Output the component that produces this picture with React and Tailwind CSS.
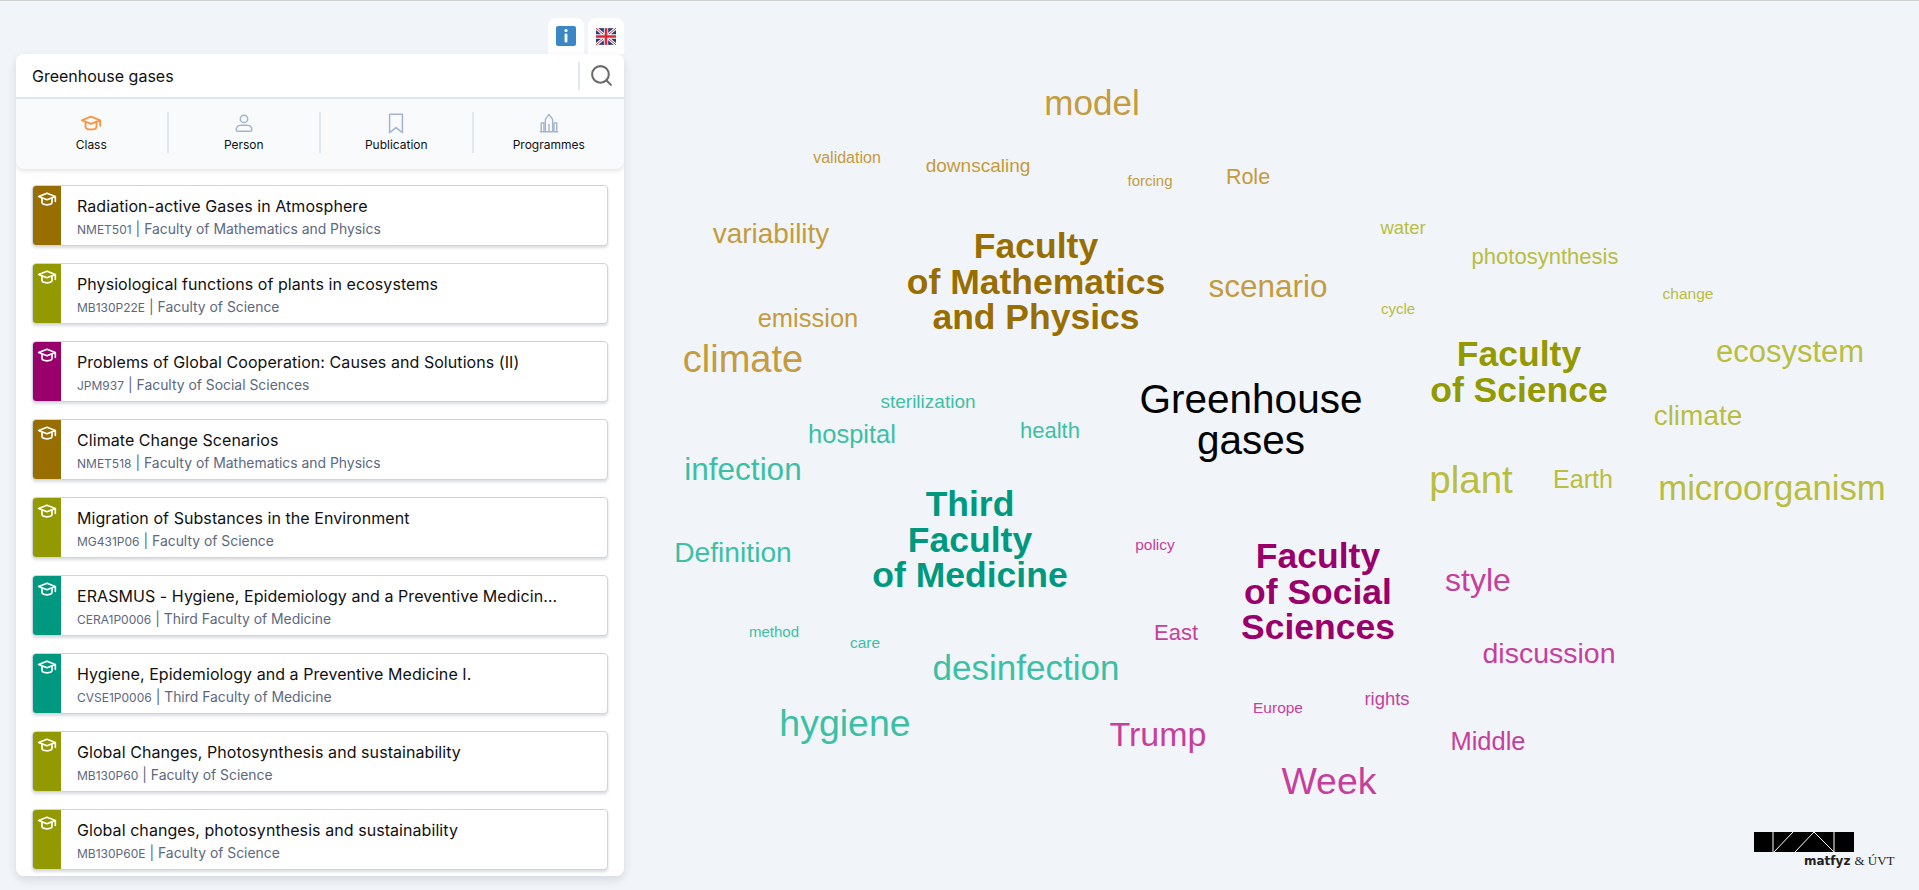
import { Search } from "lucide-react";

const classes = [
  { title: "Radiation-active Gases in Atmosphere", code: "NMET501", faculty: "Faculty of Mathematics and Physics", bar: "bg-[#996e00]" },
  { title: "Physiological functions of plants in ecosystems", code: "MB130P22E", faculty: "Faculty of Science", bar: "bg-[#939900]" },
  { title: "Problems of Global Cooperation: Causes and Solutions (II)", code: "JPM937", faculty: "Faculty of Social Sciences", bar: "bg-[#99006b]" },
  { title: "Climate Change Scenarios", code: "NMET518", faculty: "Faculty of Mathematics and Physics", bar: "bg-[#996e00]" },
  { title: "Migration of Substances in the Environment", code: "MG431P06", faculty: "Faculty of Science", bar: "bg-[#939900]" },
  { title: "ERASMUS - Hygiene, Epidemiology and a Preventive Medicine I.", code: "CERA1P0006", faculty: "Third Faculty of Medicine", bar: "bg-[#009980]" },
  { title: "Hygiene, Epidemiology and a Preventive Medicine I.", code: "CVSE1P0006", faculty: "Third Faculty of Medicine", bar: "bg-[#009980]" },
  { title: "Global Changes, Photosynthesis and sustainability", code: "MB130P60", faculty: "Faculty of Science", bar: "bg-[#939900]" },
  { title: "Global changes, photosynthesis and sustainability", code: "MB130P60E", faculty: "Faculty of Science", bar: "bg-[#939900]" },
];

const math = "text-[#c49b3d]";
const sci = "text-[#b9bd40]";
const soc = "text-[#c63f9c]";
const med = "text-[#3dbfa5]";

const words = [
  { t: "model", c: `${math} left-[1092px] top-[101px] text-[35px]` },
  { t: "validation", c: `${math} left-[847px] top-[157px] text-[16px]` },
  { t: "downscaling", c: `${math} left-[978px] top-[164px] text-[19px]` },
  { t: "forcing", c: `${math} left-[1150px] top-[179px] text-[15px]` },
  { t: "Role", c: `${math} left-[1248px] top-[177px] text-[21.5px]` },
  { t: "variability", c: `${math} left-[771px] top-[233px] text-[28px]` },
  { t: "scenario", c: `${math} left-[1268px] top-[286px] text-[31.5px]` },
  { t: "emission", c: `${math} left-[808px] top-[318px] text-[25.5px]` },
  { t: "climate", c: `${math} left-[743px] top-[358px] text-[38px]` },
  { t: "water", c: `${sci} left-[1403px] top-[227px] text-[18.5px]` },
  { t: "photosynthesis", c: `${sci} left-[1545px] top-[256px] text-[22px]` },
  { t: "change", c: `${sci} left-[1688px] top-[293px] text-[15.5px]` },
  { t: "cycle", c: `${sci} left-[1398px] top-[307px] text-[15px]` },
  { t: "ecosystem", c: `${sci} left-[1790px] top-[350px] text-[31px]` },
  { t: "climate", c: `${sci} left-[1698px] top-[415px] text-[28px]` },
  { t: "plant", c: `${sci} left-[1471px] top-[479px] text-[38.5px]` },
  { t: "Earth", c: `${sci} left-[1583px] top-[478px] text-[25px]` },
  { t: "microorganism", c: `${sci} left-[1772px] top-[487px] text-[34.7px]` },
  { t: "sterilization", c: `${med} left-[928px] top-[400px] text-[19px]` },
  { t: "hospital", c: `${med} left-[852px] top-[434px] text-[25.5px]` },
  { t: "health", c: `${med} left-[1050px] top-[430px] text-[22px]` },
  { t: "infection", c: `${med} left-[743px] top-[469px] text-[31.5px]` },
  { t: "Definition", c: `${med} left-[733px] top-[551px] text-[28.2px]` },
  { t: "method", c: `${med} left-[774px] top-[630px] text-[15px]` },
  { t: "care", c: `${med} left-[865px] top-[642px] text-[15.5px]` },
  { t: "desinfection", c: `${med} left-[1026px] top-[666px] text-[35px]` },
  { t: "hygiene", c: `${med} left-[845px] top-[723px] text-[37.5px]` },
  { t: "policy", c: `${soc} left-[1155px] top-[544px] text-[15.5px]` },
  { t: "style", c: `${soc} left-[1478px] top-[579px] text-[32px]` },
  { t: "discussion", c: `${soc} left-[1549px] top-[652px] text-[28.5px]` },
  { t: "East", c: `${soc} left-[1176px] top-[632px] text-[22px]` },
  { t: "Trump", c: `${soc} left-[1158px] top-[733px] text-[34px]` },
  { t: "Europe", c: `${soc} left-[1278px] top-[707px] text-[15.5px]` },
  { t: "rights", c: `${soc} left-[1387px] top-[698px] text-[18.5px]` },
  { t: "Middle", c: `${soc} left-[1488px] top-[741px] text-[25.5px]` },
  { t: "Week", c: `${soc} left-[1329px] top-[781px] text-[37.5px]` },
];

const heads = [
  { lines: ["Faculty", "of Mathematics", "and Physics"], c: "text-[#996e00] left-[1036px] top-[281px]" },
  { lines: ["Faculty", "of Science"], c: "text-[#939900] left-[1519px] top-[371px]" },
  { lines: ["Third", "Faculty", "of Medicine"], c: "text-[#009980] left-[970px] top-[539px]" },
  { lines: ["Faculty", "of Social", "Sciences"], c: "text-[#99006b] left-[1318px] top-[591px]" },
];

function CapIcon({ className }) {
  return (
    <svg className={className} viewBox="0 0 24 24" fill="none" stroke="currentColor" strokeWidth="2" strokeLinecap="round" strokeLinejoin="round">
      <path d="M22 9l-10-4-10 4 10 4 10-4v6" />
      <path d="M6 10.6V16a6 3 0 0 0 12 0v-5.4" />
    </svg>
  );
}

function PersonIcon({ className }) {
  return (
    <svg className={className} viewBox="0 0 24 24" fill="none" stroke="currentColor" strokeWidth="1.6" strokeLinejoin="round">
      <circle cx="12" cy="7.5" r="4" />
      <path d="M8.5 14.5h7c3 0 5 2.2 5 5 0 1-.5 1.5-1.5 1.5H5c-1 0-1.500-.5-1.500-1.500 0-2.800 2-5 5-5z" />
    </svg>
  );
}

function BookmarkIcon({ className }) {
  return (
    <svg className={className} viewBox="0 0 24 24" fill="none" stroke="currentColor" strokeWidth="1.6" strokeLinejoin="round">
      <path d="M5 2.500h14v20l-7-5.500-7 5.500z" />
    </svg>
  );
}

function BuildingIcon({ className }) {
  return (
    <svg className={className} viewBox="0 0 24 24" fill="none" stroke="currentColor" strokeWidth="1.5" strokeLinejoin="round">
      <path d="M2 21.500h20" />
      <path d="M3.500 21.500V12h3v9.500M17.500 21.500V12h3v9.500" />
      <path d="M8 21.500V8l4-5.500L16 8v13.500" />
      <path d="M12 21.500V13" />
    </svg>
  );
}

function InfoIcon() {
  return (
    <svg className="h-5 w-5" viewBox="0 0 20 20">
      <rect width="20" height="20" rx="2" fill="#3b86c4" />
      <circle cx="10" cy="4.500" r="1.600" fill="#fff" />
      <rect x="8.600" y="7.500" width="2.800" height="9" rx="1" fill="#fff" />
    </svg>
  );
}

function FlagIcon() {
  return (
    <svg className="h-[17px] w-5" viewBox="0 0 60 50">
      <rect width="60" height="50" fill="#243b7a" />
      <path d="M0 0l60 50M60 0L0 50" stroke="#fff" strokeWidth="9" />
      <path d="M0 0l60 50M60 0L0 50" stroke="#d8283c" strokeWidth="3" />
      <path d="M30 0v50M0 25h60" stroke="#fff" strokeWidth="13" />
      <path d="M30 0v50M0 25h60" stroke="#d8283c" strokeWidth="8" />
    </svg>
  );
}

function Logo() {
  return (
    <svg className="h-5 w-[100px]" viewBox="0 0 100 20">
      <rect width="100" height="20" fill="#000" />
      <path d="M19 0v20M20 20L39 0M41 20L60 0L80 20M80 0v20" stroke="#fff" strokeWidth="1" fill="none" />
    </svg>
  );
}

const tabs = [
  { label: "Class", Icon: CapIcon, color: "text-[#fb923c]" },
  { label: "Person", Icon: PersonIcon, color: "text-[#a3b3cc]" },
  { label: "Publication", Icon: BookmarkIcon, color: "text-[#a3b3cc]" },
  { label: "Programmes", Icon: BuildingIcon, color: "text-[#a3b3cc]" },
];

export default function App() {
  return (
    <div className="relative h-[890px] overflow-hidden border-t border-[#cfcfcf] bg-[#f1f5f9] font-['Inter',sans-serif]">
      {/* Word cloud */}
      <div className="absolute inset-0 font-['Liberation_Sans',sans-serif]">
        {words.map((w, i) => (
          <span key={i} className={`absolute -translate-x-1/2 -translate-y-1/2 whitespace-nowrap leading-none ${w.c}`}>
            {w.t}
          </span>
        ))}
        {heads.map((h) => (
          <div key={h.lines.join()} className={`absolute -translate-x-1/2 -translate-y-1/2 whitespace-nowrap text-center text-[35.500px] font-bold leading-[35.500px] ${h.c}`}>
            {h.lines.map((l) => (
              <div key={l}>{l}</div>
            ))}
          </div>
        ))}
        <div className="absolute left-[1251px] top-[419px] -translate-x-1/2 -translate-y-1/2 whitespace-nowrap text-center text-[40.500px] leading-[41px] text-black">
          <div>Greenhouse</div>
          <div>gases</div>
        </div>
        <div className="absolute left-[1754px] top-[831px]">
          <Logo />
          <div className="ml-[50px] mt-[1px] flex items-baseline gap-1 whitespace-nowrap text-[12px] leading-4 text-[#222]">
            <span className="font-['DejaVu_Sans',sans-serif] font-bold">matfyz</span>
            <span className="font-['Liberation_Serif',serif] text-[13px]">&amp; ÚVT</span>
          </div>
        </div>
      </div>

      {/* Left panel */}
      <div className="relative ml-4 flex w-[608px] flex-col pt-[17px]">
        <div className="flex justify-end gap-1">
          <div className="flex h-[36px] w-9 items-center justify-center rounded-t-lg bg-white"><InfoIcon /></div>
          <div className="flex h-[36px] w-9 items-center justify-center rounded-t-lg bg-white"><FlagIcon /></div>
        </div>
        <div className="flex h-[822px] flex-col overflow-hidden rounded-lg bg-white shadow-[0_4px_10px_rgba(15,23,42,0.12)]">
          <div className="flex h-[45px] shrink-0 items-center border-b-2 border-[#e2e8f0] pl-4 pr-[10px]">
            <div className="flex-1 text-base text-[#111]">Greenhouse gases</div>
            <div className="flex h-7 items-center border-l-2 border-[#e2e8f0] pl-[9px]">
              <Search className="h-[25px] w-[25px] text-[#6b6b6b]" strokeWidth={2} />
            </div>
          </div>
          <div className="flex h-[70px] shrink-0 items-start rounded-b-lg bg-[#f8fafc] pt-[13px] shadow-[0_2px_4px_rgba(15,23,42,0.12)]">
            {tabs.map((tab, i) => (
              <div key={tab.label} className={`flex h-[41px] flex-1 flex-col items-center justify-between ${i < 3 ? "border-r-2 border-[#e2e8f0]" : ""}`}>
                <tab.Icon className={`h-[22px] w-[22px] ${tab.color}`} />
                <div className="text-xs leading-4 text-[#111]">{tab.label}</div>
              </div>
            ))}
          </div>
          <div className="flex flex-col gap-[17px] pb-2 pl-4 pr-4 pt-4">
            {classes.map((c) => (
              <div key={c.code} className="flex h-[61px] shrink-0 overflow-hidden rounded border border-[#cbd5e1] bg-white shadow-[0_2px_3px_rgba(15,23,42,0.15)]">
                <div className={`flex w-[28px] shrink-0 justify-center pt-[3px] ${c.bar}`}>
                  <CapIcon className="h-5 w-5 text-white" />
                </div>
                <div className="min-w-0 flex-1 pl-4 pr-[46px] pt-[10px]">
                  <div className="truncate text-base leading-5 tracking-[0.004em] text-[#111]">{c.title}</div>
                  <div className="mt-[3px] flex items-baseline truncate text-[13.9px] leading-5 text-[#5b6880]">
                    <span className="text-xs">{c.code}</span>
                    <span className="ml-1">| {c.faculty}</span>
                  </div>
                </div>
              </div>
            ))}
          </div>
        </div>
      </div>
    </div>
  );
}
